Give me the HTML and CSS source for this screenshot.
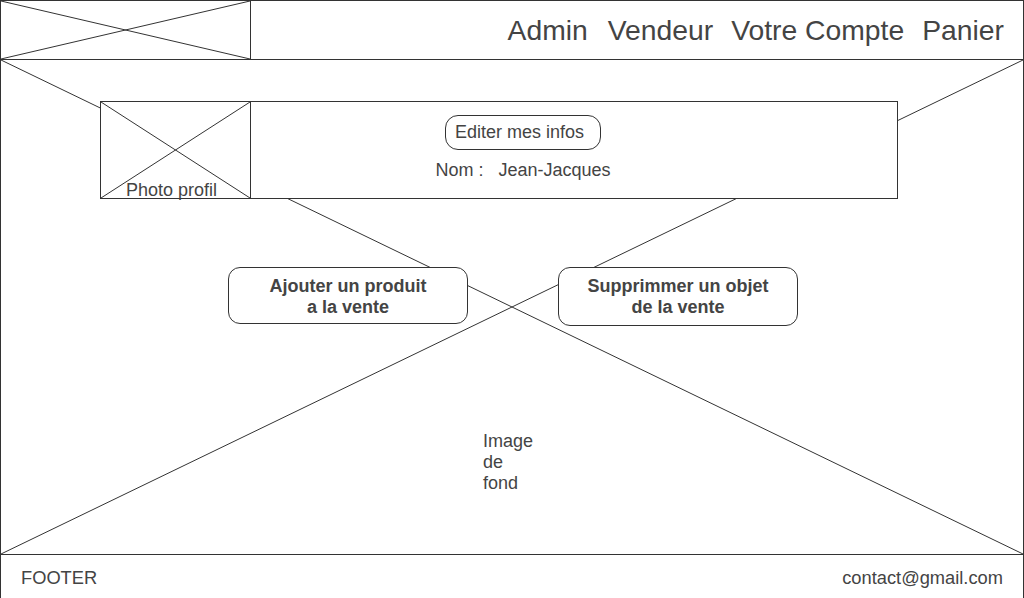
FILE: index.html
```html
<!DOCTYPE html>
<html lang="fr">
<head>
  <meta charset="UTF-8">
  <meta name="viewport" content="width=device-width, initial-scale=1.0">
  <title>Vendeur</title>
  <link rel="stylesheet" href="styles.css">
</head>
<body>
  <div class="page">
    <header>
      <div class="logo">
        <svg class="cross" viewBox="0 0 100 100" preserveAspectRatio="none">
          <line x1="0" y1="0" x2="100" y2="100" vector-effect="non-scaling-stroke"/>
          <line x1="100" y1="0" x2="0" y2="100" vector-effect="non-scaling-stroke"/>
        </svg>
      </div>
      <nav class="menu">
        <a>Admin</a>
        <a>Vendeur</a>
        <a>Votre Compte</a>
        <a>Panier</a>
      </nav>
    </header>
    <main>
      <svg class="cross" viewBox="0 0 100 100" preserveAspectRatio="none">
        <line x1="0" y1="0" x2="100" y2="100" vector-effect="non-scaling-stroke"/>
        <line x1="100" y1="0" x2="0" y2="100" vector-effect="non-scaling-stroke"/>
      </svg>
      <section class="profile">
        <div class="photo">
          <svg class="cross" viewBox="0 0 100 100" preserveAspectRatio="none">
            <line x1="0" y1="0" x2="100" y2="100" vector-effect="non-scaling-stroke"/>
            <line x1="100" y1="0" x2="0" y2="100" vector-effect="non-scaling-stroke"/>
          </svg>
          <span class="photo-label">Photo profil</span>
        </div>
        <div class="infos">
          <button class="btn-edit">Editer mes infos</button>
          <div class="name"><span class="label">Nom :</span><span>Jean-Jacques</span></div>
        </div>
      </section>
      <div class="actions">
        <button class="btn-action first">Ajouter un produit<br>a la vente</button>
        <button class="btn-action second">Supprimmer un objet<br>de la vente</button>
      </div>
      <div class="bg-label">Image de fond</div>
    </main>
    <footer>
      <span>FOOTER</span>
      <span>contact@gmail.com</span>
    </footer>
  </div>
</body>
</html>
```

FILE: styles.css
```css
* {
  box-sizing: border-box;
}
html, body {
  margin: 0;
  padding: 0;
}
body {
  font-family: "Liberation Sans", Arial, sans-serif;
  color: #444;
  background: #fff;
}
.page {
  width: 1024px;
  height: 598px;
  overflow: hidden;
}
.cross {
  position: absolute;
  top: 0;
  left: 0;
  width: 100%;
  height: 100%;
}
.cross line {
  stroke: #333;
  stroke-width: 1;
}
header {
  display: flex;
  align-items: center;
  justify-content: space-between;
  height: 60px;
  border: 1px solid #333;
}
.logo {
  position: relative;
  width: 250px;
  height: 100%;
  border-right: 1px solid #333;
}
.menu {
  display: flex;
  gap: 18px;
  padding-right: 19px;
  font-size: 28.3px;
}
.menu a:first-child {
  margin-right: 2px;
}
main {
  position: relative;
  display: flow-root;
  height: 495px;
  border: 1px solid #333;
  border-top: none;
}
.profile {
  position: relative;
  display: flex;
  width: 798px;
  height: 98px;
  margin: 41px 0 0 99px;
  border: 1px solid #333;
  background: #fff;
}
.photo {
  position: relative;
  display: flex;
  align-items: flex-end;
  justify-content: center;
  width: 150px;
  border-right: 1px solid #333;
  padding-right: 8px;
}
.photo-label {
  position: relative;
  font-size: 18px;
  line-height: 18px;
  margin-bottom: -1px;
}
.infos {
  display: flex;
  flex-direction: column;
  align-items: center;
  width: 546px;
  padding-top: 13px;
}
button {
  font-family: inherit;
  color: #444;
  background: #fff;
  border: 1px solid #333;
  cursor: pointer;
}
.btn-edit {
  height: 35px;
  padding: 0 16px 0 9px;
  border-radius: 13px;
  font-size: 18px;
  margin-left: -2px;
}
.name {
  margin-top: 10px;
  margin-left: -2px;
  font-size: 18px;
  line-height: 21px;
}
.name .label {
  margin-right: 15px;
}
.actions {
  position: relative;
  display: flex;
  align-items: flex-start;
  gap: 90px;
  margin: 68px 0 0 227px;
}
.btn-action {
  width: 240px;
  height: 57px;
  border-radius: 12px;
  font-size: 18px;
  font-weight: bold;
  line-height: 21px;
  padding: 0;
}
.btn-action.first {
  padding-top: 3px;
}
.btn-action.second {
  height: 59px;
}
.bg-label {
  position: relative;
  width: 60px;
  margin: 105px 0 0 482px;
  font-size: 18px;
  line-height: 21px;
}
footer {
  display: flex;
  align-items: center;
  justify-content: space-between;
  height: 46px;
  padding: 0 20px;
  border: 1px solid #333;
  border-top: none;
  font-size: 18.3px;
}
```
